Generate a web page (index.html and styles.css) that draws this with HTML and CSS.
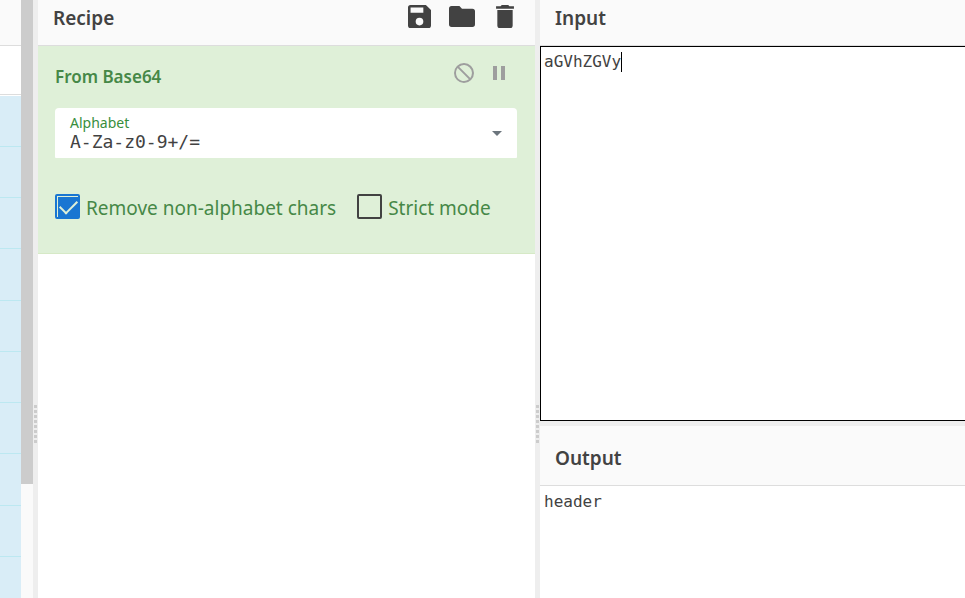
FILE: index.html
```html
<!DOCTYPE html>
<html lang="en">
<head>
<meta charset="utf-8">
<title>From Base64</title>
<link rel="stylesheet" href="styles.css">
</head>
<body>
<div class="workspace">
  <aside class="operations">
    <div class="operations-header"></div>
    <div class="operations-search"></div>
    <ul class="operations-list">
      <li></li><li></li><li></li><li></li><li></li><li></li><li></li><li></li><li></li><li></li>
    </ul>
  </aside>
  <div class="scrollbar"><div class="scrollbar-thumb"></div></div>
  <div class="gutter"><div class="grip"></div></div>

  <section class="recipe">
    <header class="title-bar">
      <h2>Recipe</h2>
      <div class="title-actions">
        <button type="button" class="icon-button" aria-label="Save recipe">
          <svg viewBox="3 3 18 18" width="23" height="23"><path d="M17 3H5a2 2 0 0 0-2 2v14a2 2 0 0 0 2 2h14a2 2 0 0 0 2-2V7zm-5 16a3 3 0 1 1 0-6 3 3 0 0 1 0 6zm3-10H5V5h10z"/></svg>
        </button>
        <button type="button" class="icon-button" aria-label="Load recipe">
          <svg viewBox="2 4 20 16" width="26" height="21"><path d="M10 4H4a2 2 0 0 0-2 2v12a2 2 0 0 0 2 2h16a2 2 0 0 0 2-2V8a2 2 0 0 0-2-2h-8z"/></svg>
        </button>
        <button type="button" class="icon-button" aria-label="Clear recipe">
          <svg viewBox="5 3 14 18" width="18" height="23"><path d="M6 19a2 2 0 0 0 2 2h8a2 2 0 0 0 2-2V7H6zM19 4h-3.500l-1-1h-5l-1 1H5v2h14z"/></svg>
        </button>
      </div>
    </header>

    <article class="operation">
      <div class="operation-head">
        <h3>From Base64</h3>
        <div class="operation-actions">
          <button type="button" class="icon-button" aria-label="Disable operation">
            <svg viewBox="2 2 20 20" width="20" height="20"><path d="M12 2a10 10 0 1 0 0 20 10 10 0 0 0 0-20zM4 12c0-1.850.63-3.550 1.690-4.900L16.900 18.310A8 8 0 0 1 4 12zm14.310 4.900L7.100 5.690A8 8 0 0 1 18.310 16.900z"/></svg>
          </button>
          <button type="button" class="icon-button" aria-label="Set breakpoint">
            <svg viewBox="0 0 12 14" width="12" height="14"><path d="M0 0h4v14H0zM8 0h4v14H8z"/></svg>
          </button>
        </div>
      </div>
      <div class="field">
        <label for="alphabet">Alphabet</label>
        <input id="alphabet" type="text" value="A-Za-z0-9+/=" spellcheck="false">
        <button type="button" class="field-toggle" aria-label="Choose alphabet">
          <svg viewBox="0 0 10 5" width="10" height="5"><path d="M0 0h10L5 5z"/></svg>
        </button>
      </div>
      <div class="options">
        <label class="option"><input type="checkbox" checked>Remove non-alphabet chars</label>
        <label class="option"><input type="checkbox">Strict mode</label>
      </div>
    </article>
  </section>

  <div class="gutter"><div class="grip"></div></div>

  <main class="io">
    <section class="input-pane">
      <header class="title-bar"><h2><label for="input-text">Input</label></h2></header>
      <div class="editor">
        <textarea id="input-text" spellcheck="false">aGVhZGVy</textarea>
        <span class="caret"></span>
      </div>
    </section>
    <section class="output-pane">
      <header class="title-bar output-title"><h2><label for="output-text">Output</label></h2></header>
      <textarea id="output-text" readonly>header</textarea>
    </section>
  </main>
</div>
</body>
</html>
```

FILE: styles.css
```css
* {
  box-sizing: border-box;
}

body {
  margin: 0;
  overflow: hidden;
  background: #fff;
  color: #424242;
  font-family: "Noto Sans", "Open Sans", sans-serif;
}

h2,
h3 {
  margin: 0;
  font-size: 19px;
  line-height: 24px;
  font-weight: 600;
}

.workspace {
  display: grid;
  grid-template-columns: 21px 12px 5px minmax(0, 497fr) 5px minmax(0, 425fr);
  height: 100vh;
}

.operations {
  overflow: hidden;
}

.operations-header {
  height: 46px;
  background: #fafafa;
  border-bottom: 1px solid #ddd;
}

.operations-search {
  height: 49px;
  margin-bottom: 1px;
  border-bottom: 1px solid #ddd;
}

.operations-list {
  margin: 0;
  padding: 0;
  list-style: none;
}

.operations-list li {
  height: 51px;
  background: #d9edf7;
  border-bottom: 1px solid #bce8f1;
}

.operations-list li:nth-child(4n) {
  height: 52px;
}

.scrollbar {
  background: #fafafa;
}

.scrollbar-thumb {
  height: 81%;
  background: #ccc;
}

.gutter {
  display: flex;
  justify-content: center;
  padding-top: 405px;
  background: #eee;
}

.grip {
  width: 3px;
  height: 38px;
  background: repeating-linear-gradient(#ccc 0 3px, transparent 3px 5px);
}

.title-bar {
  display: flex;
  align-items: flex-start;
  justify-content: space-between;
  height: 46px;
  padding: 6px 17px 0 15px;
  background: #fafafa;
  border-bottom: 1px solid #ddd;
}

.title-actions {
  display: flex;
  align-items: center;
  gap: 17px;
  height: 20px;
}

.icon-button {
  display: flex;
  justify-content: center;
  padding: 0;
  border: 0;
  background: none;
  color: inherit;
}

.title-actions .icon-button {
  width: 26px;
}

svg {
  display: block;
  fill: currentColor;
}

.operation {
  padding: 17px 18px 33px 17px;
  background: #dff0d8;
  border-bottom: 1px solid #d6e9c6;
  color: #468847;
}

.operation-head {
  display: flex;
  justify-content: space-between;
  height: 45px;
  padding-top: 2px;
}

.operation-head h3 {
  font-size: 17px;
}

.operation-actions {
  display: flex;
  align-items: center;
  gap: 19px;
  height: 16px;
  padding-right: 12px;
  color: #9e9e9e;
}

.field {
  position: relative;
  height: 50px;
  padding: 6px 15px 0;
  background: #fff;
  border-radius: 4px 4px 1px 1px;
}

.field label {
  display: block;
  font-size: 14px;
  line-height: 18px;
  color: #388e3c;
}

.field input {
  display: block;
  width: 90%;
  height: 20px;
  padding: 0;
  border: 0;
  outline: 0;
  background: none;
  color: #424242;
  font: 18px/20px "DejaVu Sans Mono", monospace;
}

.field-toggle {
  position: absolute;
  inset: 0 0 0 auto;
  display: flex;
  align-items: center;
  width: 40px;
  padding: 0 15px;
  border: 0;
  background: none;
  color: #6c757d;
}

.options {
  display: flex;
  gap: 21px;
  padding-top: 36px;
}

.option {
  display: flex;
  align-items: flex-start;
  gap: 6px;
  height: 26px;
  font-size: 19px;
  line-height: 28px;
  white-space: nowrap;
}

.option input {
  appearance: none;
  flex: none;
  width: 25px;
  height: 25px;
  margin: 0;
  border: 2px solid #424242;
  border-radius: 2px;
}

.option input:checked {
  border-color: #1976d2;
  background: #1976d2;
  box-shadow: inset 1px 1px #dff0d8;
}

.option input:checked::before {
  content: "";
  display: block;
  width: 15px;
  height: 8px;
  margin: 4px 0 0 3px;
  border: solid #dff0d8;
  border-width: 0 0 2px 2px;
  transform: rotate(-45deg);
}

.io {
  display: flex;
  flex-direction: column;
  min-width: 0;
}

.input-pane {
  display: flex;
  flex-direction: column;
  flex: 421 1 0;
  min-height: 0;
}

.editor {
  position: relative;
  flex: 1;
  margin-right: -2px;
  border: 1px solid #000;
  font: 16px/20px "DejaVu Sans Mono", monospace;
}

textarea {
  display: block;
  width: 100%;
  height: 100%;
  padding: 5px 3px;
  border: 0;
  outline: 0;
  resize: none;
  background: none;
  color: #424242;
  font: 16px/20px "DejaVu Sans Mono", monospace;
}

.caret {
  position: absolute;
  top: 5px;
  left: calc(3px + 8ch);
  width: 1px;
  height: 20px;
  background: #000;
}

.output-pane {
  flex: 172 1 0;
  min-height: 0;
  border-top: 5px solid #eee;
}

.output-title {
  height: 60px;
  padding-top: 20px;
}

#output-text {
  height: auto;
  padding: 6px 4px;
}
```
